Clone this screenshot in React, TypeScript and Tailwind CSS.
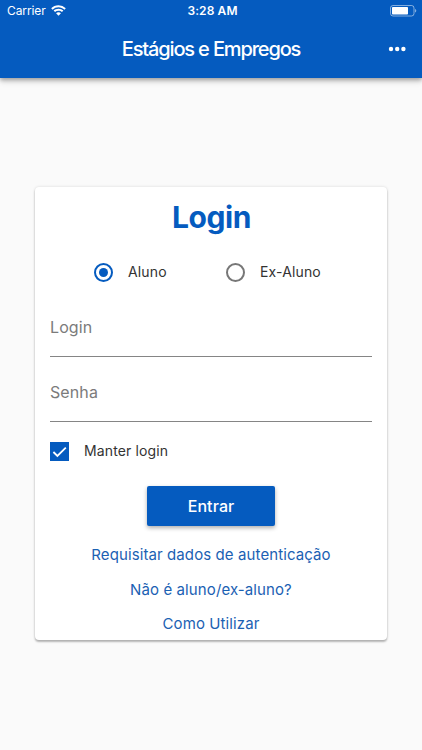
import { useState } from "react";

type Profile = "aluno" | "ex-aluno";

const PROFILES: { id: Profile; label: string; width: string }[] = [
  { id: "aluno", label: "Aluno", width: "w-[132px]" },
  { id: "ex-aluno", label: "Ex-Aluno", width: "w-[100px]" },
];

const LINKS = ["Requisitar dados de autenticação", "Não é aluno/ex-aluno?", "Como Utilizar"];

function StatusBar() {
  return (
    <div className="grid h-[22px] grid-cols-3 items-center pl-[7px] pr-[5px] text-[12px] leading-[22px]">
      <div className="flex items-center">
        <span className="w-[38px] tracking-[-0.1px]">Carrier</span>
        <svg width="15" height="11" viewBox="0 0 14 10.400" className="-mt-[1px] ml-[6px]" fill="currentColor" aria-hidden>
          <path d="M7 .2C4.3.2 1.9 1.3.1 3l1.3 1.4A8.1 8.1 0 0 1 7 2.1c2.2 0 4.1.9 5.6 2.3L13.9 3A10 10 0 0 0 7 .2Z" />
          <path d="M7 3.5c-1.8 0-3.4.7-4.6 1.8l1.3 1.4A4.8 4.8 0 0 1 7 5.4c1.3 0 2.4.5 3.3 1.3l1.3-1.4A6.7 6.7 0 0 0 7 3.5Z" />
          <path d="M7 6.8c-.9 0-1.7.3-2.3.9L7 10.2l2.3-2.5A3.4 3.4 0 0 0 7 6.8Z" />
        </svg>
      </div>
      <span className="pl-[1px] text-center font-semibold tracking-[0.1px]">3:28 AM</span>
      <svg width="27" height="12" viewBox="0 0 27 12" className="-mt-[1px] justify-self-end" aria-hidden>
        <rect x="0.5" y="0.5" width="23.5" height="10.5" rx="2.5" fill="none" stroke="#fff" strokeOpacity="0.5" />
        <rect x="2" y="2" width="16" height="7.5" rx="0.8" fill="#fff" />
        <path d="M25 4v3.5c.8-.3 1.3-1 1.3-1.75S25.8 4.3 25 4Z" fill="#fff" fillOpacity="0.5" />
      </svg>
    </div>
  );
}

function Field({ label, type }: { label: string; type: string }) {
  return (
    <input
      type={type}
      placeholder={label}
      aria-label={label}
      className="block h-[65px] w-full border-b border-[#858585] bg-transparent pt-[5px] text-[16px] tracking-[0.1px] text-[#333] outline-none placeholder:text-[#7b7b7b]"
    />
  );
}

export default function App() {
  const [profile, setProfile] = useState<Profile>("aluno");
  const [keep, setKeep] = useState(true);

  return (
    <div className="flex h-[750px] w-full flex-col bg-[#fafafa] font-['Inter','Liberation_Sans',sans-serif] text-[#333]">
      <header className="h-[78px] bg-[#055bbf] text-white shadow-[0_2px_4px_rgba(0,0,0,0.28),0_4px_6px_rgba(0,0,0,0.12)]">
        <StatusBar />
        <div className="grid h-[54px] grid-cols-[40px_1fr_40px] items-center">
          <h1 className="col-start-2 text-center text-[20px] font-medium leading-[52px] tracking-[-1.15px]">
            Estágios e Empregos
          </h1>
          <button type="button" aria-label="Menu" className="pl-[6px]">
            <svg width="18" height="6" viewBox="0 0 18 6" fill="currentColor">
              <circle cx="3" cy="3" r="2.2" />
              <circle cx="9.2" cy="3" r="2.2" />
              <circle cx="15.4" cy="3" r="2.2" />
            </svg>
          </button>
        </div>
      </header>

      <main className="mx-[35px] mt-[109px] h-[453px] rounded-[4px] bg-white px-[15px] shadow-[0_2px_2px_rgba(0,0,0,0.26),0_0_3px_rgba(0,0,0,0.14)]">
        <h2 className="h-[62px] pl-[1px] text-center text-[30px] font-bold leading-[61px] tracking-[-0.4px] text-[#055bbf]">
          Login
        </h2>

        <div className="flex h-[46px] items-center pl-[44px]">
          {PROFILES.map((p) => (
            <button
              key={p.id}
              type="button"
              role="radio"
              aria-checked={profile === p.id}
              onClick={() => setProfile(p.id)}
              className={`flex items-center whitespace-nowrap text-[14px] tracking-[0.15px] ${p.width}`}
            >
              <span
                className={`flex size-[19px] shrink-0 items-center justify-center rounded-full border-2 ${
                  profile === p.id ? "border-[#055bbf]" : "border-[#777]"
                }`}
              >
                {profile === p.id && <span className="size-[9px] rounded-full bg-[#055bbf]" />}
              </span>
              <span className="ml-[15px] pb-[2px]">{p.label}</span>
            </button>
          ))}
        </div>

        <div className="-mt-[3px]">
          <Field label="Login" type="text" />
          <Field label="Senha" type="password" />
        </div>

        <button
          type="button"
          role="checkbox"
          aria-checked={keep}
          onClick={() => setKeep(!keep)}
          className="flex h-[59px] items-center text-[14px] tracking-[0.12px]"
        >
          <span className="flex size-[19px] items-center justify-center bg-[#055bbf] text-white">
            {keep && (
              <svg width="15" height="12" viewBox="0 0 15 12" fill="none" stroke="currentColor" strokeWidth="1.8">
                <path d="m1.4 6 4 4L13.8 1.6" />
              </svg>
            )}
          </span>
          <span className="ml-[15px] pb-[2px]">Manter login</span>
        </button>

        <button
          type="button"
          className="mx-auto mt-[5px] block h-[40px] w-[128px] rounded-[2px] bg-[#055bbf] text-[16px] font-medium tracking-[0.1px] text-white shadow-[0_2px_4px_rgba(0,0,0,0.32)]"
        >
          Entrar
        </button>

        <nav className="mt-[11px] flex flex-col items-center text-[15px] tracking-[0.1px] text-[#1b61b3]">
          {LINKS.map((label) => (
            <a key={label} href="#" className="h-[34.5px] whitespace-nowrap leading-[35.5px]">
              {label}
            </a>
          ))}
        </nav>
      </main>
    </div>
  );
}
